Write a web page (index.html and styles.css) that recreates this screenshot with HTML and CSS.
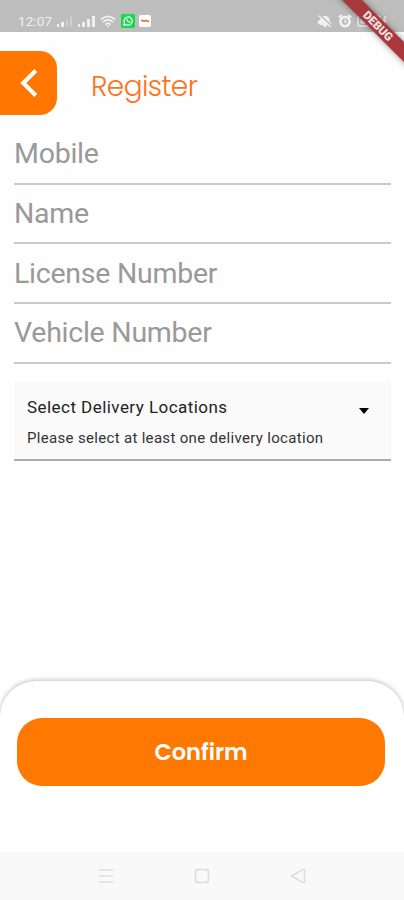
FILE: index.html
```html
<!DOCTYPE html>
<html lang="en">
<head>
  <meta charset="UTF-8">
  <title>Register</title>
  <link rel="stylesheet" href="styles.css">
</head>
<body>

  <!-- Status bar -->
  <div class="status-bar">
    <div class="status-left">
      <span class="time">12:07</span>
      <svg class="signal" width="17" height="12" viewBox="0 0 17 12" fill="#fff">
        <rect x="0" y="9" width="2" height="3" opacity=".8"/>
        <rect x="4" y="7" width="3" height="5" opacity=".8"/>
        <rect x="9" y="4" width="2" height="8" opacity=".25"/>
        <rect x="13" y="1" width="2" height="11" opacity=".25"/>
      </svg>
      <svg class="signal" width="17" height="12" viewBox="0 0 17 12" fill="#fff" opacity=".75">
        <rect x="0" y="9" width="2" height="3"/>
        <rect x="4" y="7" width="3" height="5"/>
        <rect x="9" y="4" width="3" height="8"/>
        <rect x="14" y="1" width="3" height="11"/>
      </svg>
      <svg class="wifi" width="16" height="13" viewBox="0 0 16 13" fill="none" stroke="#fff" stroke-width="1.7" opacity=".8">
        <path d="M.7 4.6Q8-2 15.3 4.6M3.1 7.1Q8 2.8 12.9 7.1M5.4 9.5Q8 7.2 10.6 9.5"/>
        <path d="M6.4 10.6h3.2L8 12.6z" fill="#fff" stroke="none"/>
      </svg>
      <svg class="app-icon" width="14" height="14" viewBox="0 0 14 14">
        <rect width="14" height="14" rx="1.5" fill="#16d94b"/>
        <path d="M2.8 11.2l.7-2.3A4.1 4.1 0 1 1 5.1 10.6z" fill="none" stroke="#fff" stroke-width="1.2"/>
        <path d="M5.4 4.8c-.5 1.5 1.8 4.2 3.7 3.8l.5-1-1.3-.7-.6.5-1.3-1.3.4-.7-.5-1z" fill="#fff"/>
      </svg>
      <svg class="app-icon" width="12" height="12" viewBox="0 0 12 12">
        <rect width="12" height="12" rx="2" fill="#fff"/>
        <path d="M2 5.8q1-1 2 0t2 0 2 0 2 0" fill="none" stroke="#e2743f" stroke-width="1.7"/>
      </svg>
    </div>
    <div class="status-right">
      <svg width="17" height="14" viewBox="0 0 17 14" fill="#fff" opacity=".8">
        <path d="M1 8l3-2c1-4 6-6 9-2l1 4 2 2-5 1-1 2H8l-1-2H4z"/>
        <path d="M4 1l12 11" stroke="#bdbdbd" stroke-width="1.5"/>
        <path d="M2.5 1.5l12 11.5" stroke="#fff" stroke-width="1.2"/>
      </svg>
      <svg width="14" height="14" viewBox="0 0 14 14" fill="none" stroke="#fff" opacity=".85">
        <circle cx="7" cy="7.6" r="4.6" stroke-width="2.4"/>
        <path d="M1 3.5L3.8 1M13 3.5L10.2 1" stroke-width="2.2"/>
        <path d="M7 5.2v2.6l1.7 1" stroke-width="1.2"/>
      </svg>
      <svg width="32" height="14" viewBox="0 0 32 14" fill="none" stroke="#fff" opacity=".75">
        <rect x="1" y="2" width="22" height="10" rx="2" stroke-width="1.5"/>
        <path d="M4 5h15v4H4z" fill="#fff"/>
        <path d="M28 2l-3 5h2l-1 5 4-6h-2l1-4z" fill="#fff" stroke="none"/>
      </svg>
    </div>
  </div>
  <div class="ribbon-corner"><div class="ribbon">DEBUG</div></div>

  <!-- Header -->
  <header class="header">
    <button class="back-btn" type="button" aria-label="Back">
      <svg width="20" height="30" viewBox="0 0 20 30" fill="none" stroke="#fff" stroke-width="4.2">
        <path d="M16.8 2.5L4.3 15l12.5 12.5"/>
      </svg>
    </button>
    <h1>Register</h1>
  </header>

  <!-- Registration Form -->
  <form class="form">
    <input class="field" type="text" placeholder="Mobile">
    <input class="field" type="text" placeholder="Name">
    <input class="field" type="text" placeholder="License Number">
    <input class="field" type="text" placeholder="Vehicle Number">

    <div class="locations">
      <div class="locations-row">
        <span class="locations-title">Select Delivery Locations</span>
        <span class="arrow"></span>
      </div>
      <p class="locations-hint">Please select at least one delivery location</p>
    </div>
  </form>

  <!-- Bottom sheet -->
  <div class="sheet">
    <button class="confirm-btn" type="button">Confirm</button>
  </div>

  <!-- Navigation bar -->
  <nav class="nav-bar">
    <svg width="16" height="16" viewBox="0 0 16 16" stroke="#dedede" stroke-width="1.5">
      <path d="M1 2h14M1 8h14M1 14h14"/>
    </svg>
    <svg width="16" height="16" viewBox="0 0 16 16" fill="none" stroke="#dcdcdc" stroke-width="1.5">
      <rect x="1.5" y="1.5" width="13" height="13" rx="2.5"/>
    </svg>
    <svg width="16" height="16" viewBox="0 0 16 16" fill="none" stroke="#dcdcdc" stroke-width="1.5" stroke-linejoin="round">
      <path d="M1.5 8L13 1.5q1.5-.5 1.5 1v11q0 1.5-1.5 1z"/>
    </svg>
  </nav>

</body>
</html>
```

FILE: styles.css
```css
* {
  box-sizing: border-box;
}

body {
  margin: 0;
  height: 900px;
  display: flex;
  flex-direction: column;
  position: relative;
  overflow: hidden;
  background-color: #fefefe;
  font-family: Roboto, sans-serif;
}

svg {
  display: block;
}

/* Status bar */
.status-bar {
  height: 32px;
  padding: 9px 15px 0 18px;
  display: flex;
  justify-content: space-between;
  align-items: flex-start;
  background-color: #bdbdbd;
}

.status-left,
.status-right {
  display: flex;
  align-items: center;
}

.status-left {
  height: 24px;
}

.status-right {
  height: 23px;
  gap: 5px;
}

.time {
  width: 39px;
  font-size: 13.5px;
  letter-spacing: 0.1px;
  color: #f0f0f0;
}

.signal {
  margin-right: 4px;
}

.wifi {
  margin-left: 1px;
  margin-right: 5px;
}

.app-icon {
  margin-right: 4px;
}

/* Debug ribbon, over the top right corner */
.ribbon-corner {
  position: absolute;
  top: 0;
  right: 0;
  width: 80px;
  height: 80px;
  overflow: hidden;
}

.ribbon {
  position: absolute;
  top: 19px;
  left: -6px;
  width: 120px;
  height: 14px;
  line-height: 14px;
  text-align: center;
  transform: rotate(45deg);
  background-color: #a8383c;
  box-shadow: 0 0 6px rgba(0, 0, 0, 0.45);
  color: #f5e4e4;
  font-size: 11.5px;
  font-weight: 900;
}

/* Header */
.header {
  display: flex;
  align-items: center;
  height: 64px;
  margin-top: 19px;
}

.back-btn {
  width: 57px;
  height: 64px;
  padding: 0 0 0 19px;
  border: none;
  border-radius: 0 17px 17px 0;
  background-color: #ff7600;
}

.header h1 {
  margin: 8px 0 0 34px;
  font-family: Poppins, Lato, sans-serif;
  font-size: 28px;
  font-weight: 300;
  letter-spacing: -0.6px;
  color: #fc7420;
}

/* Form */
.form {
  flex: 1;
  padding: 10px 13px 0 14px;
}

.field {
  display: block;
  width: 100%;
  height: 59.7px;
  padding: 0;
  border: none;
  border-bottom: 2px solid #cacaca;
  outline: none;
  background: transparent;
  font-family: Roboto, sans-serif;
  font-size: 28.5px;
  letter-spacing: -0.25px;
}

.field::placeholder {
  color: #999;
  opacity: 1;
}

.locations {
  height: 80px;
  margin-top: 17.6px;
  padding: 16px 22px 0 13px;
  background-color: #fafafa;
  border-bottom: 2px solid #acacac;
}

.locations-row {
  display: flex;
  justify-content: space-between;
  align-items: center;
  height: 20px;
}

.locations-title {
  font-size: 17px;
  letter-spacing: 0.45px;
  color: #222;
}

.arrow {
  margin-top: 7px;
  border-left: 5.5px solid transparent;
  border-right: 5.5px solid transparent;
  border-top: 6px solid #000;
}

.locations-hint {
  margin: 12px 0 0;
  font-size: 15px;
  line-height: 18px;
  letter-spacing: 0.32px;
  color: #333;
}

/* Bottom sheet */
.sheet {
  height: 171px;
  padding: 37px 19px 0 17px;
  border-radius: 36px 36px 0 0;
  background-color: #fff;
  box-shadow: 0 -1px 4px rgba(0, 0, 0, 0.25);
}

.confirm-btn {
  display: block;
  width: 100%;
  height: 68px;
  border: none;
  border-radius: 25px;
  background-color: #ff7800;
  color: #fff;
  font-family: Poppins, Inter, sans-serif;
  font-size: 22.5px;
  font-weight: 600;
}

/* Navigation bar */
.nav-bar {
  position: relative;
  height: 48px;
  display: flex;
  justify-content: center;
  align-items: center;
  gap: 80px;
  background-color: #f9f9f9;
}
```
